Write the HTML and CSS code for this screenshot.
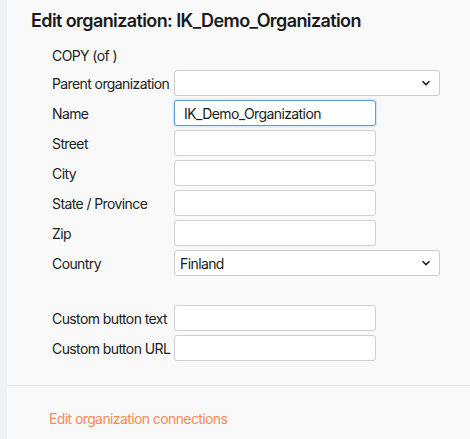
FILE: index.html
```html
<!DOCTYPE html>
<html lang="en">

<head>
    <meta charset="UTF-8">
    <title>Edit organization</title>
    <link rel="stylesheet" href="styles.css">
</head>

<body>
    <div class="page">
        <div class="sidebar"></div>
        <div class="main">
            <div class="edit-section">
                <h2>Edit organization: IK_Demo_Organization</h2>
                <form class="org-form">
                    <div class="copy-row">COPY (of )</div>

                    <div class="form-row">
                        <label for="parentOrg">Parent organization</label>
                        <select id="parentOrg" class="wide">
                            <option value=""></option>
                        </select>
                    </div>
                    <div class="form-row">
                        <label for="orgName">Name</label>
                        <input type="text" id="orgName" class="focused" value="IK_Demo_Organization">
                    </div>
                    <div class="form-row">
                        <label for="street">Street</label>
                        <input type="text" id="street">
                    </div>
                    <div class="form-row">
                        <label for="city">City</label>
                        <input type="text" id="city">
                    </div>
                    <div class="form-row">
                        <label for="state">State / Province</label>
                        <input type="text" id="state">
                    </div>
                    <div class="form-row">
                        <label for="zip">Zip</label>
                        <input type="text" id="zip">
                    </div>
                    <div class="form-row">
                        <label for="country">Country</label>
                        <select id="country" class="wide">
                            <option value="fi">Finland</option>
                        </select>
                    </div>

                    <div class="form-row spaced">
                        <label for="btnText">Custom button text</label>
                        <input type="text" id="btnText">
                    </div>
                    <div class="form-row">
                        <label for="btnUrl">Custom button URL</label>
                        <input type="text" id="btnUrl">
                    </div>
                </form>
            </div>
            <div class="links-section">
                <a href="#" class="org-link">Edit organization connections</a>
            </div>
        </div>
    </div>
</body>

</html>
```

FILE: styles.css
```css
html,
body {
    margin: 0;
    height: 100%;
}

body {
    font-family: Inter, 'Noto Sans', sans-serif;
    font-size: 14px;
    letter-spacing: -0.6px;
    color: #222;
    background: #f9f9f9;
}

.page {
    display: flex;
    min-height: 100%;
}

.sidebar {
    width: 7px;
    background: #eef1f6;
    flex-shrink: 0;
}

.main {
    flex: 1;
}

.edit-section {
    padding: 10px 0 20px 24px;
    border-bottom: 1px solid #e6e6e6;
}

.edit-section h2 {
    margin: 0 0 15px;
    font-size: 18px;
    font-weight: 600;
    color: #1a1a1a;
}

.org-form {
    padding-left: 21px;
}

.copy-row {
    height: 20px;
    line-height: 20px;
    margin-bottom: 4px;
}

.form-row {
    display: flex;
    align-items: center;
    margin-bottom: 4px;
}

.form-row.spaced {
    margin-top: 29px;
}

.form-row label {
    width: 122px;
    flex-shrink: 0;
    white-space: nowrap;
}

.form-row input,
.form-row select {
    box-sizing: border-box;
    height: 26px;
    width: 202px;
    margin: 0;
    border: 1px solid #cfcfd4;
    border-radius: 3px;
    background: #fff;
    font-family: inherit;
    font-size: 14px;
    letter-spacing: -0.6px;
    color: #1a1a1a;
    padding: 0 9px;
}

.form-row select.wide {
    width: 266px;
    padding: 0 24px 0 5px;
    appearance: none;
    border-color: #cccccc;
    background: #fff url("data:image/svg+xml,%3Csvg xmlns='http://www.w3.org/2000/svg' width='10' height='6' viewBox='0 0 10 6'%3E%3Cpath d='M1.5 1.2 L5 4.6 L8.5 1.2' fill='none' stroke='%23222' stroke-width='1.6'/%3E%3C/svg%3E") no-repeat right 8px center;
}

.form-row input.focused {
    border-color: #5b9fd0;
    box-shadow: 0 0 3px rgba(102, 175, 233, 0.6);
    outline: none;
}

.links-section {
    padding: 24px 0 0 42px;
}

.org-link {
    color: #f78a52;
    text-decoration: none;
}
```
